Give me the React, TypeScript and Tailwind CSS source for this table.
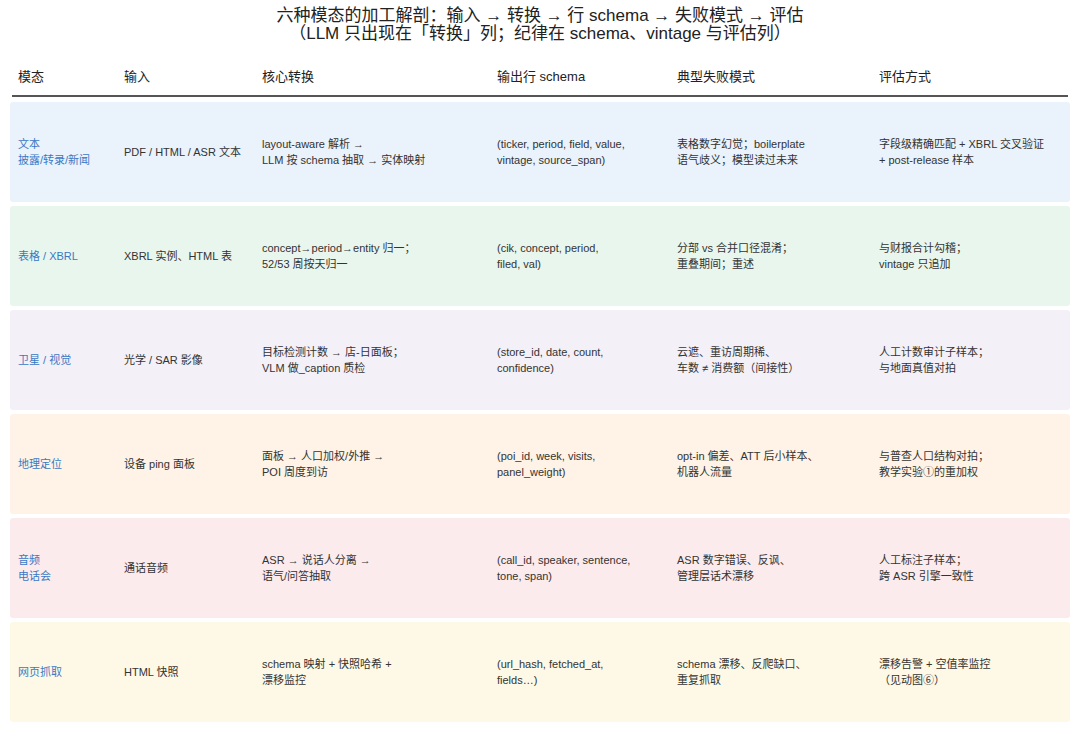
type Row = {
  bg: string;
  cells: string[][];
};

const rows: Row[] = [
  {
    bg: "bg-[#eaf2fb]",
    cells: [
      ["文本", "披露/转录/新闻"],
      ["PDF / HTML / ASR 文本"],
      ["layout-aware 解析 →", "LLM 按 schema 抽取 → 实体映射"],
      ["(ticker, period, field, value,", "vintage, source_span)"],
      ["表格数字幻觉；boilerplate", "语气歧义；模型读过未来"],
      ["字段级精确匹配 + XBRL 交叉验证", "+ post-release 样本"],
    ],
  },
  {
    bg: "bg-[#e9f6ee]",
    cells: [
      ["表格 / XBRL"],
      ["XBRL 实例、HTML 表"],
      ["concept→period→entity 归一；", "52/53 周按天归一"],
      ["(cik, concept, period,", "filed, val)"],
      ["分部 vs 合并口径混淆；", "重叠期间；重述"],
      ["与财报合计勾稽；", "vintage 只追加"],
    ],
  },
  {
    bg: "bg-[#f3f0f7]",
    cells: [
      ["卫星 / 视觉"],
      ["光学 / SAR 影像"],
      ["目标检测计数 → 店-日面板；", "VLM 做_caption 质检"],
      ["(store_id, date, count,", "confidence)"],
      ["云遮、重访周期稀、", "车数 ≠ 消费额（间接性）"],
      ["人工计数审计子样本；", "与地面真值对拍"],
    ],
  },
  {
    bg: "bg-[#fef3e6]",
    cells: [
      ["地理定位"],
      ["设备 ping 面板"],
      ["面板 → 人口加权/外推 →", "POI 周度到访"],
      ["(poi_id, week, visits,", "panel_weight)"],
      ["opt-in 偏差、ATT 后小样本、", "机器人流量"],
      ["与普查人口结构对拍；", "教学实验①的重加权"],
    ],
  },
  {
    bg: "bg-[#fcebed]",
    cells: [
      ["音频", "电话会"],
      ["通话音频"],
      ["ASR → 说话人分离 →", "语气/问答抽取"],
      ["(call_id, speaker, sentence,", "tone, span)"],
      ["ASR 数字错误、反讽、", "管理层话术漂移"],
      ["人工标注子样本；", "跨 ASR 引擎一致性"],
    ],
  },
  {
    bg: "bg-[#fef9e6]",
    cells: [
      ["网页抓取"],
      ["HTML 快照"],
      ["schema 映射 + 快照哈希 +", "漂移监控"],
      ["(url_hash, fetched_at,", "fields…)"],
      ["schema 漂移、反爬缺口、", "重复抓取"],
      ["漂移告警 + 空值率监控", "（见动图⑥）"],
    ],
  },
];

const headers = ["模态", "输入", "核心转换", "输出行 schema", "典型失败模式", "评估方式"];

const grid = "grid grid-cols-[106px_138px_235px_180px_202px_1fr] items-center";

export default function App() {
  return (
    <div className="w-[1080px] h-[738px] bg-white text-[#333] overflow-hidden font-['Liberation_Sans','Noto_Sans_CJK_SC',sans-serif]">
      {/* Title */}
      <div className="pt-[7px] text-center text-[17px] leading-[18px] text-[#222]">
        <div>六种模态的加工解剖：输入 → 转换 → 行 schema → 失败模式 → 评估</div>
        <div>（LLM 只出现在「转换」列；纪律在 schema、vintage 与评估列）</div>
      </div>

      {/* Header */}
      <div className="mt-[16px] mx-[12px]">
        <div className={`${grid} h-[36px] pl-[6px] text-[13px] text-[#222]`}>
          {headers.map((h) => (
            <div key={h}>{h}</div>
          ))}
        </div>
        <div className="h-[2px] bg-[#555]" />
      </div>

      {/* Rows */}
      <div className="mt-[5px] mx-[10px] flex flex-col gap-[4px]">
        {rows.map((r, i) => (
          <div key={i} className={`${grid} h-[100px] pl-[8px] rounded-[3px] ${r.bg} text-[11px] leading-[16px]`}>
            {r.cells.map((c, j) => (
              <div key={j} className={j === 0 ? "text-[#3b78c4]" : ""}>
                {c.map((line, k) => (
                  <div key={k}>{line}</div>
                ))}
              </div>
            ))}
          </div>
        ))}
      </div>
    </div>
  );
}
